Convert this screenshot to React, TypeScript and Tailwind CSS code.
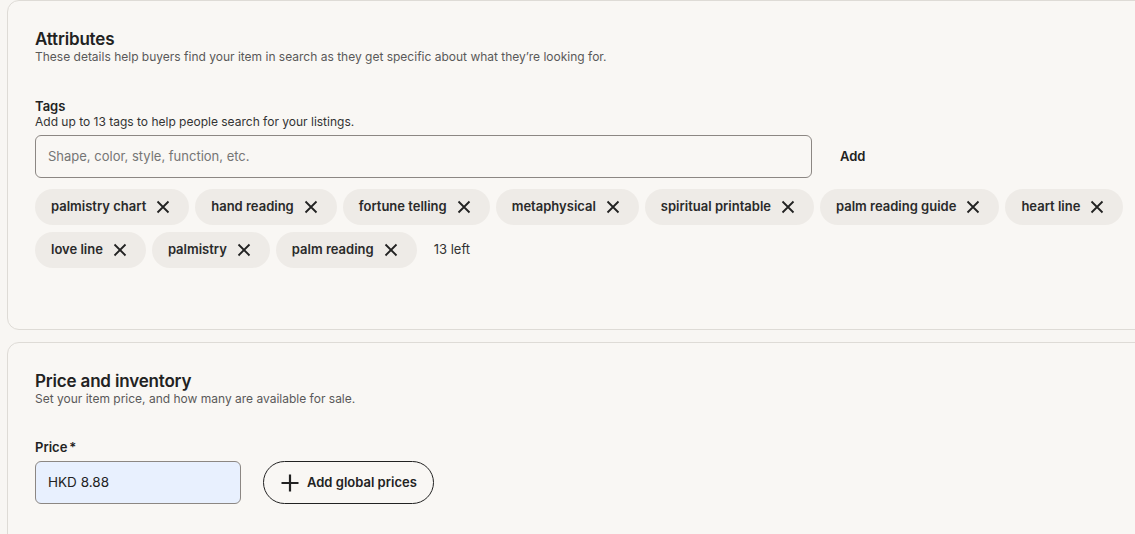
import React from "react";

const tags = [
  "palmistry chart",
  "hand reading",
  "fortune telling",
  "metaphysical",
  "spiritual printable",
  "palm reading guide",
  "heart line",
  "love line",
  "palmistry",
  "palm reading",
];

const CloseIcon = () => (
  <svg width="16" height="16" viewBox="0 0 16 16" fill="none" aria-hidden="true">
    <path d="M2.5 2.5L13.5 13.5M13.5 2.5L2.5 13.5" stroke="#222222" strokeWidth="1.8" />
  </svg>
);

const PlusIcon = () => (
  <svg width="18" height="18" viewBox="0 0 18 18" fill="none" aria-hidden="true">
    <path d="M9 0.5V17.5M0.5 9H17.5" stroke="#222222" strokeWidth="2.2" />
  </svg>
);

const Tag: React.FC<{ label: string }> = ({ label }) => (
  <div className="flex items-center gap-[9px] h-9 pl-4 pr-[18px] rounded-full bg-[#eeebe7] text-[13px] font-semibold text-[#2a2a2a]">
    <span>{label}</span>
    <CloseIcon />
  </div>
);

const SectionHeader: React.FC<{ title: string; subtitle: string }> = ({ title, subtitle }) => (
  <div>
    <h2 className="text-[17px] leading-5 font-semibold tracking-[-0.01em] text-[#222222]">{title}</h2>
    <p className="text-[12px] leading-[15px] text-[#595959]">{subtitle}</p>
  </div>
);

export default function App() {
  return (
    <div
      className="w-full h-[534px] overflow-hidden bg-[#f8f6f3] text-[#222222]"
      style={{ fontFamily: "Inter, 'Noto Sans', sans-serif" }}
    >
      <div className="ml-[7px] w-[1220px] flex flex-col gap-3">
        {/* Attributes */}
        <section className="h-[330px] rounded-xl border border-[#dedbd6] bg-[#f9f7f4] pl-[27px] pr-12 pt-[28px]">
          <SectionHeader
            title="Attributes"
            subtitle="These details help buyers find your item in search as they get specific about what they’re looking for."
          />

          <div className="mt-[34px]">
            <div className="text-[13px] leading-4 font-semibold">Tags</div>
            <div className="text-[12px] leading-[15px] text-[#333333]">
              Add up to 13 tags to help people search for your listings.
            </div>

            <div className="mt-[6px] flex items-center">
              <div className="w-[777px] h-[43px] rounded-md border border-[#8c8783] flex items-center px-3 text-[13px] text-[#757575]">
                Shape, color, style, function, etc.
              </div>
              <button className="ml-[28px] text-[13px] font-semibold">Add</button>
            </div>

            <div className="mt-[11px] flex flex-wrap items-center gap-x-[6px] gap-y-[7px]">
              {tags.map((t) => (
                <Tag key={t} label={t} />
              ))}
              <span className="ml-[11px] text-[13px] text-[#333333]">13 left</span>
            </div>
          </div>
        </section>

        {/* Price and inventory */}
        <section className="h-[300px] rounded-xl border border-[#dedbd6] bg-[#f9f7f4] pl-[27px] pr-12 pt-[28px]">
          <SectionHeader
            title="Price and inventory"
            subtitle="Set your item price, and how many are available for sale."
          />

          <div className="mt-[33px]">
            <div className="text-[13px] leading-4 font-semibold">
              Price<span className="ml-[2px]">*</span>
            </div>
            <div className="mt-[6px] flex items-center gap-[22px]">
              <div className="w-[206px] h-[43px] rounded-md border border-[#8c8783] bg-[#e8f0fe] flex items-center px-3 text-[13.5px] text-[#222222]">
                HKD 8.88
              </div>
              <button className="h-[43px] flex items-center gap-2 pl-[17px] pr-4 rounded-full border border-[#222222] text-[13px] font-semibold">
                <PlusIcon />
                Add global prices
              </button>
            </div>
          </div>
        </section>
      </div>
    </div>
  );
}
